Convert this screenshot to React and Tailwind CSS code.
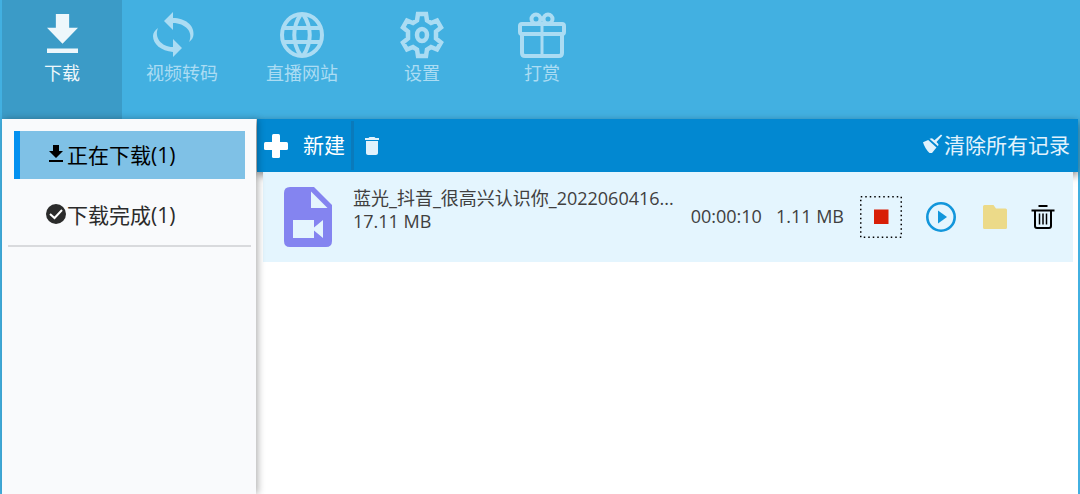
import React from 'react'

const DownloadIcon = ({ className }) => (
  <svg viewBox="5 3 14 17" className={className} fill="currentColor" preserveAspectRatio="none" aria-hidden="true">
    <path d="M19 9h-4V3H9v6H5l7 7zM5 18v2h14v-2z" />
  </svg>
)

const ConvertIcon = () => (
  <svg viewBox="0 0 58 48" className="w-[58px] h-12" fill="currentColor" aria-hidden="true">
    <path d="M11 10 20 1V7C32 7 41 14 40.500 23 40.500 26 39 29 36 31 41 21 32 12 20 12V19Z" />
    <path d="M29 37 20 46V41C8 40 0 33 0 25 0 22 2 19 5 17 1 26 8 36 20 36V28Z" />
  </svg>
)

const GlobeIcon = () => (
  <svg viewBox="0 0 46 48" className="w-[46px] h-12" fill="none" stroke="currentColor" strokeWidth="4" aria-hidden="true">
    <ellipse cx="23" cy="24" rx="20" ry="21" />
    <path d="M22 3C13 16 13 32 22 45M24 3C33 16 33 32 24 45M4 17H42M4 31H42" />
  </svg>
)

const GearIcon = () => (
  <svg viewBox="0 0 44 48" className="w-11 h-12" fill="none" stroke="currentColor" strokeWidth="4.500" aria-hidden="true">
    <path d="M18 3H26L27 9.500L31 12 37 9.500 41 16.500 36 20.500V27.500L41 31.500 37 38.500 31 36 27 38.500 26 45H18L17 38.500 13 36 7 38.500 3 31.500 8 27.500V20.500L3 16.500 7 9.500 13 12 17 9.500Z" />
    <ellipse cx="22" cy="24" rx="5" ry="6" />
  </svg>
)

const GiftIcon = () => (
  <svg viewBox="0 0 50 48" className="w-[50px] h-12" fill="none" stroke="currentColor" strokeWidth="4" aria-hidden="true">
    <rect x="3" y="13" width="44" height="10" rx="2" />
    <path d="M5 23V42Q5 45 8 45H42Q45 45 45 42V23" />
    <path d="M25 13V45" strokeWidth="3" />
    <circle cx="19" cy="8" r="4.500" />
    <circle cx="31" cy="8" r="4.500" />
  </svg>
)

const CheckIcon = () => (
  <svg viewBox="0 0 20 20" className="size-5 mb-0.5" aria-hidden="true">
    <circle cx="10" cy="10" r="10" fill="#2b2b2b" />
    <path d="M4 10 8.500 14 16 6" fill="none" stroke="#fff" strokeWidth="2" />
  </svg>
)

const PlusIcon = () => (
  <svg viewBox="0 0 24 24" className="size-6" fill="#fff" aria-hidden="true">
    <rect x="8" y="0" width="8" height="24" rx="1.500" />
    <rect x="0" y="8" width="24" height="8" rx="1.500" />
  </svg>
)

const BinIcon = () => (
  <svg viewBox="5 3 14 18" className="w-3.5 h-[18px]" fill="currentColor" aria-hidden="true">
    <path d="M6 19c0 1.100.9 2 2 2h8c1.100 0 2-.9 2-2V7H6zM19 4h-3.500l-1-1h-5l-1 1H5v2h14z" />
  </svg>
)

const BroomIcon = () => (
  <svg viewBox="0 0 20 20" className="size-5 mb-1" fill="currentColor" aria-hidden="true">
    <path d="M18 0.500 19.300 1.600 13.500 8 15.500 10.300 15 12.200 6.500 4.700 9 4.200 11.500 6.300Z" />
    <path d="M0 8.300 5.200 6 13.500 13.500 9 19 6.500 19Q2 15 0 8.300Z" />
  </svg>
)

const VideoFileIcon = () => (
  <svg viewBox="4 2 16 20" className="w-12 h-[60px] shrink-0" aria-hidden="true">
    <path
      fill="#8484f0"
      fillRule="evenodd"
      d="M6 2H14L20 8V20Q20 22 18 22H6Q4 22 4 20V4Q4 2 6 2ZM13 3.500V9H18.500ZM7 13V19H14V16.500L17 19V13L14 15.500V13Z"
    />
  </svg>
)

// 带虚线焦点框的停止图标
const StopIcon = () => (
  <svg viewBox="0 0 42 42" className="size-[42px]" aria-hidden="true">
    <rect x="0.750" y="0.750" width="40.500" height="40.500" fill="none" stroke="#000" strokeWidth="1.500" strokeDasharray="1.500 3" />
    <rect x="14" y="13.500" width="14.500" height="14.500" fill="#d81e06" />
  </svg>
)

const PlayIcon = () => (
  <svg viewBox="0 0 30 30" className="size-[30px]" aria-hidden="true">
    <circle cx="15" cy="15" r="13.700" fill="none" stroke="#1296db" strokeWidth="2.600" />
    <path d="M12 8.500 21 15 12 21.500Z" fill="#1296db" />
  </svg>
)

const FolderIcon = () => (
  <svg viewBox="0 0 24 24" className="size-6" fill="#ecda89" aria-hidden="true">
    <path d="M1.500 0H10.500L13 3.500H22.500Q24 3.500 24 5V22.500Q24 24 22.500 24H1.500Q0 24 0 22.500V1.500Q0 0 1.500 0Z" />
  </svg>
)

const TrashIcon = () => (
  <svg viewBox="0 0 24 24" className="size-6" fill="none" stroke="#000" strokeWidth="2" aria-hidden="true">
    <path d="M7.500 1H16.500M0.500 5.500H23.500M4 5.500V21Q4 23 6 23H18Q20 23 20 21V5.500" />
    <path d="M8.500 8.500V19.500M12 8.500V19.500M15.500 8.500V19.500" strokeWidth="1.500" />
  </svg>
)

const tabs = [
  { label: '下载', icon: <DownloadIcon className="w-[31px] h-[39px] mb-1" />, active: true },
  { label: '视频转码', icon: <ConvertIcon /> },
  { label: '直播网站', icon: <GlobeIcon /> },
  { label: '设置', icon: <GearIcon /> },
  { label: '打赏', icon: <GiftIcon /> },
]

const App = () => {
  return (
    <div className="min-h-screen flex flex-col border-x-2 border-[#42b0e1] bg-white font-['Open_Sans','Noto_Sans_CJK_SC',sans-serif] text-lg">
      <header className="bg-[#42b0e1]">
        <nav className="flex">
          {tabs.map((t) => (
            <button
              key={t.label}
              type="button"
              className={`w-[120px] h-[119px] pt-[11px] flex flex-col items-center ${t.active ? 'bg-[#3b9bc7] text-[#eef7fb]' : 'text-[#abdcf3]'}`}
            >
              <span className="h-12 flex items-center">{t.icon}</span>
              <span className="leading-7">{t.label}</span>
            </button>
          ))}
        </nav>
      </header>

      <div className="flex flex-1">
        <aside className="relative z-20 w-[254px] shrink-0 bg-[#f9fafc] shadow-[2px_0_7px_rgba(0,0,0,0.3)]">
          <div className="pl-3 pr-[11px] pt-3 pb-1.5 flex flex-col gap-3 text-[21px]">
            <a href="#downloading" className="h-12 pl-7 flex items-center border-l-6 border-[#0491f0] bg-[#7fc1e6] text-black">
              <span className="w-[19px] pl-px pb-1"><DownloadIcon className="w-3.5 h-[17px]" /></span>
              正在下载(1)
            </a>
            <a href="#finished" className="h-12 pl-8 flex items-center gap-px text-[#2b2b2b]">
              <CheckIcon />
              下载完成(1)
            </a>
          </div>
          <hr className="ml-1.5 mr-[5px] border-t-2 border-[#d9dadd]" />
        </aside>

        <main className="flex-1 min-w-0 pl-px">
          <div className="h-[53px] pr-2 relative z-10 flex items-center bg-[#0288d1] text-[21px] text-[#e1f2fc] shadow-[0_3px_8px_rgba(0,0,0,0.5)]">
            <button type="button" className="h-[49px] pl-[7px] pr-1.5 flex items-center gap-[15px] border-r-3 border-[#0a7abb] text-white">
              <PlusIcon />
              新建
            </button>
            <button type="button" aria-label="删除" className="px-[11px]">
              <BinIcon />
            </button>
            <button type="button" className="ml-auto flex items-center gap-px">
              <BroomIcon />
              清除所有记录
            </button>
          </div>

          <ul className="px-[5px] pl-1.5">
            <li className="relative z-10 h-[90px] pl-[21px] pr-[18px] flex items-center bg-[#e4f5fe] text-[#404040]">
              <VideoFileIcon />
              <div className="ml-[21px] h-[60px] flex-1 min-w-0 leading-[23px]">
                <p className="truncate">蓝光_抖音_很高兴认识你_2022060416...</p>
                <p>17.11 MB</p>
              </div>
              <div className="ml-2 pb-0.5 flex gap-3.5">
                <span>00:00:10</span>
                <span>1.11 MB</span>
              </div>
              <div className="ml-4 flex items-center">
                <button type="button" aria-label="停止"><StopIcon /></button>
                <button type="button" aria-label="播放" className="ml-6"><PlayIcon /></button>
                <button type="button" aria-label="打开文件夹" className="ml-[27px]"><FolderIcon /></button>
                <button type="button" aria-label="删除记录" className="ml-6"><TrashIcon /></button>
              </div>
            </li>
          </ul>
        </main>
      </div>
    </div>
  )
}

export default App
